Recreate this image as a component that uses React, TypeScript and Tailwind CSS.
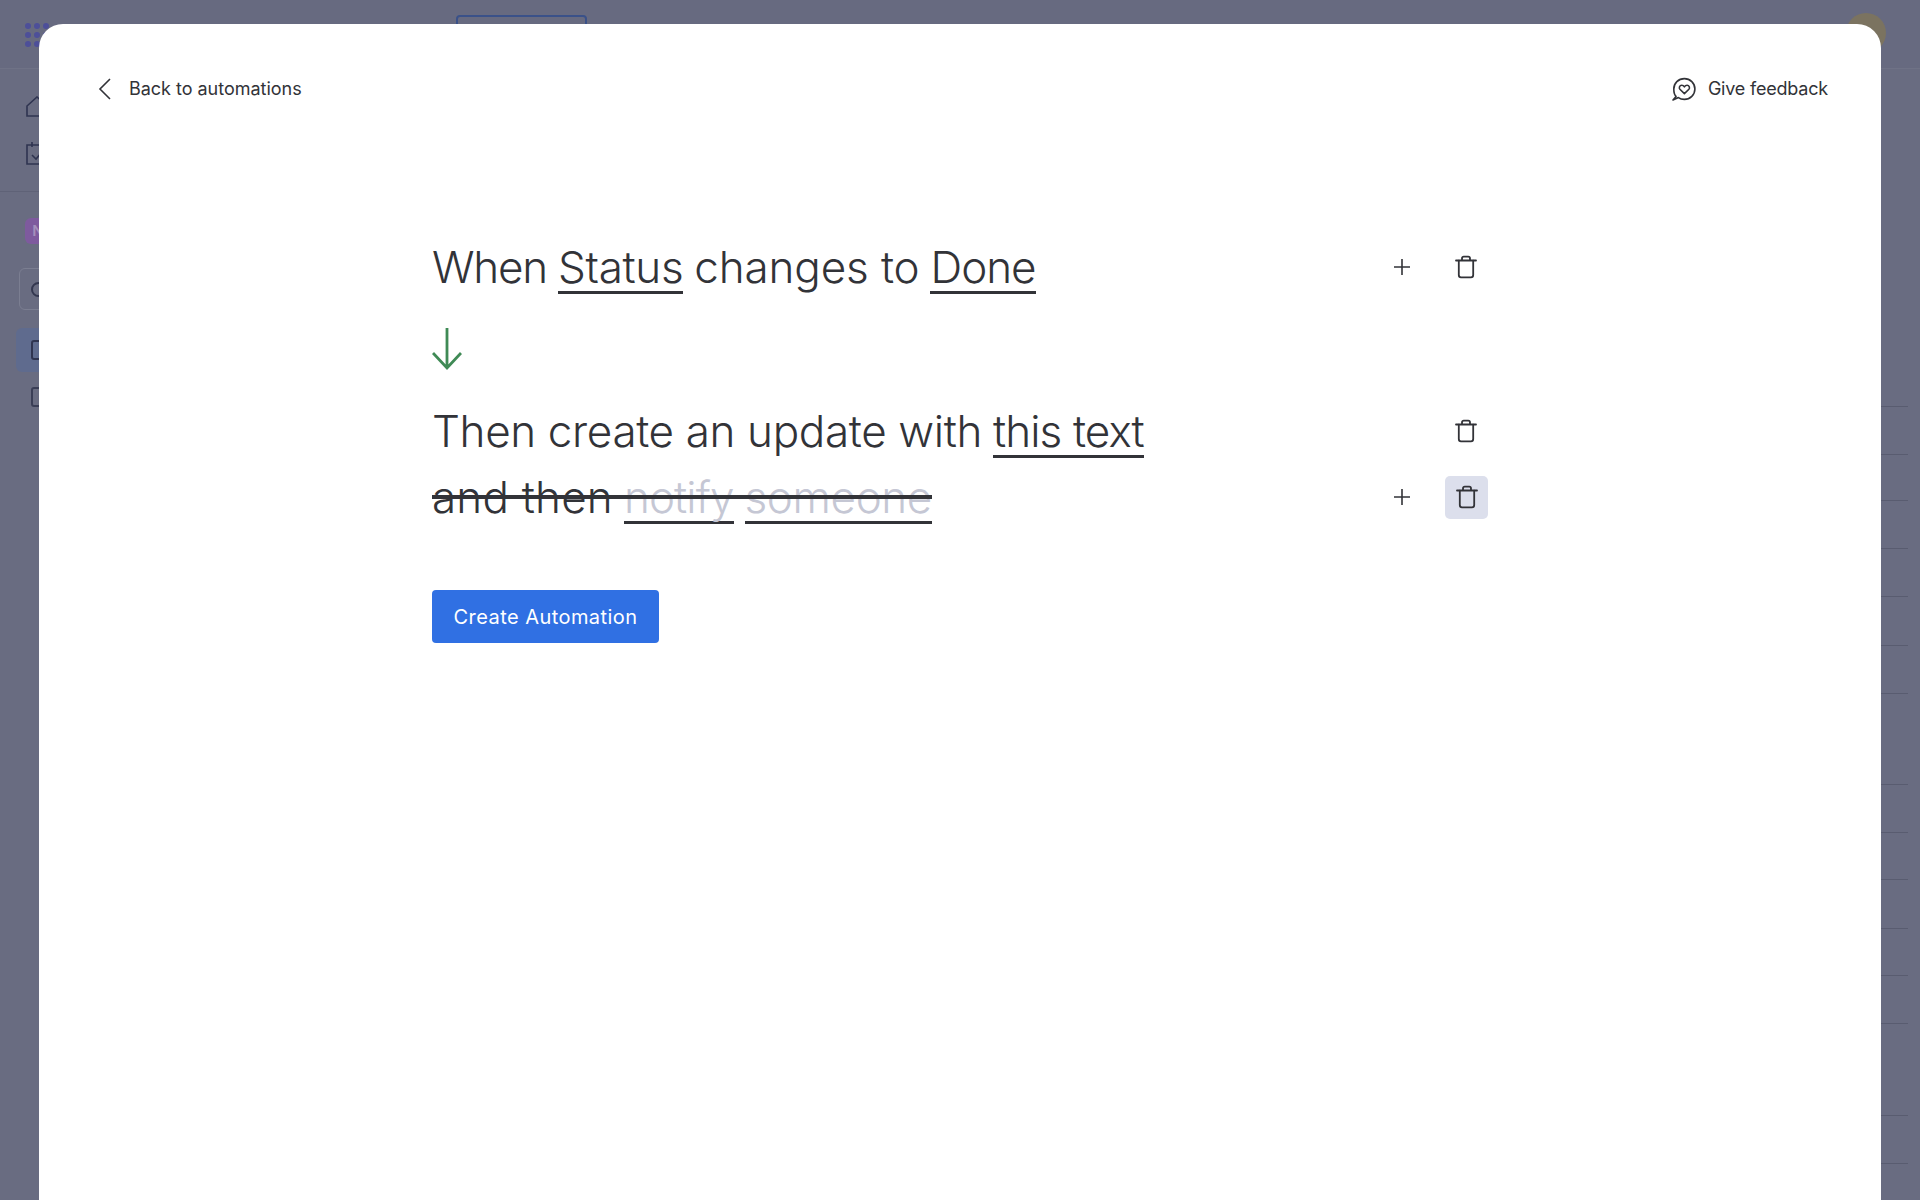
import React from "react";

const Trash = () => (
  <svg width="24" height="24" viewBox="0 0 24 24" fill="none" stroke="#323338" strokeWidth="1.8" strokeLinecap="round" strokeLinejoin="round">
    <path d="M2 5.5H22" />
    <path d="M8 5.2V3.4C8 2.4 8.7 1.7 9.7 1.7H14.3C15.3 1.7 16 2.4 16 3.4V5.2" />
    <path d="M4.8 5.6V20C4.8 21.4 5.8 22.3 7 22.3H17C18.2 22.3 19.2 21.4 19.2 20V5.6" />
  </svg>
);

const Plus = () => (
  <svg width="18" height="18" viewBox="0 0 18 18" fill="none" stroke="#323338" strokeWidth="1.6">
    <path d="M9 1V17M1 9H17" />
  </svg>
);

const Slot = ({ children, className }: { children: React.ReactNode; className?: string }) => (
  <span className={`inline-block h-[52px] border-b-[3px] border-[#323338] leading-[50px] ${className ?? ""}`}>{children}</span>
);

const rowLines = [406, 454, 500, 548, 596, 645, 693, 784, 832, 879, 928, 975, 1023, 1115, 1163];

export default function App() {
  return (
    <div className="relative h-[1200px] w-[1920px] overflow-hidden bg-[#696c81] font-['Inter',sans-serif]">
      <header className="flex h-[69px] items-start border-b border-[#6f7286] bg-[#676a80]">
        <div className="ml-[25px] mt-[23px] grid grid-cols-3 gap-[3px]">
          {Array.from({ length: 9 }).map((_, i) => (
            <span key={i} className="h-[6px] w-[6px] rounded-full bg-[#4d4f99]" />
          ))}
        </div>
        <div className="ml-[407px] mt-[15px] h-[30px] w-[131px] rounded-[4px] border-2 border-[#3a5189]" />
        <div className="ml-auto mr-[34px] mt-[13px] h-[40px] w-[40px] rounded-full bg-[#7b7360]" />
      </header>
      <div className="flex">
        <aside className="w-[39px] shrink-0">
          <svg className="ml-[26px] mt-[27px]" width="22" height="22" viewBox="0 0 22 22" fill="none" stroke="#2f3450" strokeWidth="1.6">
            <path d="M1 10L11 1L21 10V20H1Z" />
          </svg>
          <svg className="ml-[26px] mt-[23px]" width="22" height="24" viewBox="0 0 22 24" fill="none" stroke="#2f3450" strokeWidth="1.6">
            <path d="M1 4H21V23H1ZM6 1V6M16 1V6M6 14L10 18L16 11" />
          </svg>
          <div className="mt-[26px] h-px w-[39px] bg-[#5f6277]" />
          <div className="ml-[25px] mt-[26px] flex h-[26px] w-[26px] items-center justify-center rounded-[6px] bg-[#7e5a9e] text-[15px] font-semibold text-[#a48fbc]">N</div>
          <div className="ml-[19px] mt-[24px] flex h-[42px] w-[30px] items-center rounded-[6px] border border-[#7b7e91]">
            <span className="ml-[11px] h-[15px] w-[15px] rounded-full border-2 border-[#33374f]" />
          </div>
          <div className="ml-[16px] mt-[18px] flex h-[44px] w-[30px] items-center rounded-[6px] bg-[#5f6b8e]">
            <span className="ml-[15px] h-[20px] w-[14px] rounded-[3px] border-2 border-[#2f3450]" />
          </div>
          <div className="ml-[31px] mt-[15px] h-[20px] w-[14px] rounded-[3px] border-2 border-[#3a3e56]" />
        </aside>
      </div>
      <div className="absolute right-[12px] top-0 w-[27px]">
        {rowLines.map((y) => (
          <div key={y} className="absolute left-0 h-px w-[27px] bg-[#595c70]" style={{ top: y }} />
        ))}
      </div>

      <div className="absolute bottom-0 left-[39px] right-[39px] top-[24px] rounded-t-[24px] bg-white text-[#323338]">
        <div className="flex items-center justify-between pl-[58px] pr-[53px] pt-[52px]">
          <div className="flex items-center">
            <svg width="16" height="24" viewBox="0 0 16 24" fill="none" stroke="#323338" strokeWidth="1.6">
              <path d="M13 2L3 12L13 22" />
            </svg>
            <span className="ml-[16px] text-[18px] leading-[26px] tracking-[-0.02px]">Back to automations</span>
          </div>
          <div className="flex items-center">
            <svg className="-mt-[1px] -ml-[1px]" width="24" height="24" viewBox="0 0 24 24" fill="none" stroke="#323338" strokeWidth="1.6" strokeLinejoin="round">
              <path d="M1 23L4 19.4C2.2 17.6 1.8 15.6 1.8 12C1.8 6.2 6.4 1.6 12.4 1.6C18.2 1.6 22.9 6.2 22.9 12C22.9 17.8 18.2 22.4 12.4 22.4C10 22.4 8 21.8 6.4 20.6Z" />
              <path d="M12.4 16.6L7.9 12.2C6.7 10.9 7.5 8.2 9.7 8.2C10.9 8.2 11.8 8.8 12.4 9.8C13 8.8 13.9 8.2 15.1 8.2C17.3 8.2 18.1 10.9 16.9 12.2Z" />
            </svg>
            <span className="ml-[12px] text-[18px] leading-[26px] tracking-[-0.2px]">Give feedback</span>
          </div>
        </div>

        <div className="ml-[393px] mt-[140px] w-[1056px] text-[44px] font-light">
          <div className="flex h-[54px] items-start justify-between">
            <div className="flex gap-[11px] whitespace-nowrap leading-[50px]">
              <span className="tracking-[-1.2px]">When</span>
              <Slot className="tracking-[-0.3px]">Status</Slot>
              <span className="tracking-[-0.14px]">changes to</span>
              <Slot className="tracking-[-1px]">Done</Slot>
            </div>
            <div className="flex h-[50px] w-[95px] items-center justify-between pr-[10px]">
              <Plus />
              <Trash />
            </div>
          </div>

          <svg className="mt-[31px]" width="30" height="44" viewBox="0 0 30 44" fill="none" stroke="#3f8a55" strokeWidth="2.8">
            <path d="M15 1V41M1 26L15 41L29 26" />
          </svg>

          <div className="mt-[35px] flex h-[54px] items-start justify-between">
            <div className="flex gap-[11px] whitespace-nowrap leading-[50px]">
              <span className="tracking-[-0.36px]">Then create an update with</span>
              <Slot className="tracking-[-0.9px]">this text</Slot>
            </div>
            <div className="flex h-[50px] w-[95px] items-center justify-end pr-[10px]">
              <Trash />
            </div>
          </div>

          <div className="mt-[12px] flex h-[54px] items-start justify-between">
            <div className="relative flex gap-[11px] whitespace-nowrap leading-[50px]">
              <span className="tracking-[0.2px]">and then</span>
              <span className="text-[#c5c7d4]"><Slot className="tracking-[-0.9px]">notify</Slot></span>
              <span className="text-[#c5c7d4]"><Slot className="tracking-[-0.4px]">someone</Slot></span>
              <div className="absolute left-0 right-0 top-[23px] h-[4px] bg-[#323338]" />
            </div>
            <div className="flex h-[50px] w-[95px] items-center justify-between">
              <Plus />
              <span className="flex h-[43px] w-[43px] items-center justify-center rounded-[5px] bg-[#dcdfec]"><Trash /></span>
            </div>
          </div>

          <button className="mt-[64px] block h-[53px] w-[227px] rounded-[4px] bg-[#3070e3] text-center text-[20px] font-normal tracking-[0.45px] text-white">
            Create Automation
          </button>
        </div>
      </div>
    </div>
  );
}
